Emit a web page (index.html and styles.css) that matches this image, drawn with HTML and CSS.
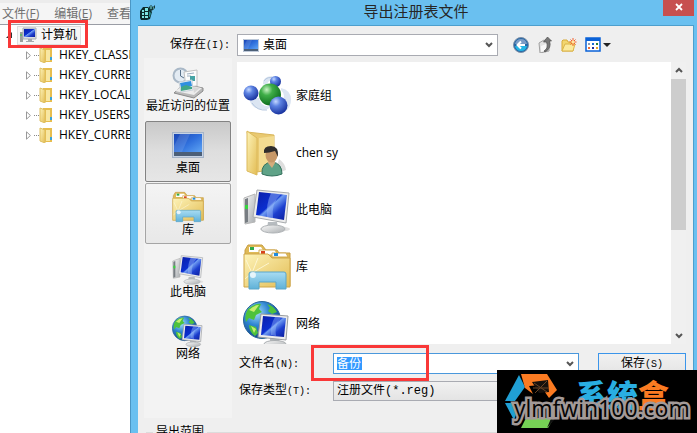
FILE: index.html
```html
<!DOCTYPE html>
<html lang="zh-CN">
<head>
<meta charset="utf-8">
<title>导出注册表文件</title>
<link rel="stylesheet" href="styles.css">
</head>
<body>
<svg class="defs" width="0" height="0" aria-hidden="true">
  <defs>
    <linearGradient id="screen" x1="0" y1="0" x2="1" y2="1">
      <stop offset="0" stop-color="#0a1ea8"/><stop offset=".45" stop-color="#0b2fd0"/><stop offset=".5" stop-color="#6f9cf2"/><stop offset=".7" stop-color="#1d3fcf"/><stop offset="1" stop-color="#0a1b9a"/>
    </linearGradient>
    <linearGradient id="desk" x1="0" y1="0" x2="1" y2="1">
      <stop offset="0" stop-color="#1a45b4"/><stop offset=".5" stop-color="#2f6fdc"/><stop offset="1" stop-color="#5ea4f4"/>
    </linearGradient>
    <linearGradient id="metal" x1="0" y1="0" x2="1" y2="1">
      <stop offset="0" stop-color="#fafafa"/><stop offset="1" stop-color="#a9adb0"/>
    </linearGradient>
    <linearGradient id="paper" x1="0" y1="0" x2="1" y2="1">
      <stop offset="0" stop-color="#fdf3b8"/><stop offset="1" stop-color="#e3bd55"/>
    </linearGradient>
    <linearGradient id="glass" x1="0" y1="0" x2="0" y2="1">
      <stop offset="0" stop-color="#a8dcf2"/><stop offset="1" stop-color="#5fb1d8"/>
    </linearGradient>
    <radialGradient id="blueball" cx=".35" cy=".28" r=".75">
      <stop offset="0" stop-color="#c4d8ff"/><stop offset=".35" stop-color="#5c82e2"/><stop offset="1" stop-color="#16309c"/>
    </radialGradient>
    <radialGradient id="greenball" cx=".35" cy=".28" r=".75">
      <stop offset="0" stop-color="#c9f3c4"/><stop offset=".35" stop-color="#3fae48"/><stop offset="1" stop-color="#0b6a1b"/>
    </radialGradient>
    <radialGradient id="sea" cx=".35" cy=".3" r=".75">
      <stop offset="0" stop-color="#a8e0fb"/><stop offset=".45" stop-color="#2f86d2"/><stop offset="1" stop-color="#0c3a80"/>
    </radialGradient>
  </defs>

  <symbol id="i-home" viewBox="0 0 48 48">
    <path d="M20 12Q20 2 34 5L30 9Q24 8 24 14ZM38 16Q48 18 48 28Q48 35 42 40L38 30Q44 24 38 18ZM6 27Q10 40 25 37L28 34Q18 36 16 26Z" fill="#dbe5f2"/>
    <path d="M21 9Q24 4 32 6M9 31Q14 39 24 38" fill="none" stroke="#b5c7df"/>
    <circle cx="32.500" cy="9.500" r="5.500" fill="url(#blueball)"/>
    <circle cx="8" cy="21" r="7.500" fill="url(#blueball)"/>
    <circle cx="27" cy="22.500" r="11" fill="url(#greenball)"/>
    <circle cx="35.500" cy="33.500" r="9" fill="url(#blueball)"/>
  </symbol>

  <symbol id="i-user" viewBox="0 0 48 48">
    <path d="M32 45L43 41Q42 34 36 30Z" fill="#dedede"/>
    <path d="M4 3L31 6V40L14 43Z" fill="#e9c970" stroke="#d9b65c"/>
    <path d="M16 9L31 7V39L16 42Z" fill="#f3dc91"/>
    <path d="M4 2L14 9V46L4 42Z" fill="url(#paper)" stroke="#dcb95a"/>
    <path d="M19 45Q18 34 29 33Q39 34 39 45Q29 49 19 45Z" fill="#5fa287" stroke="#33705c"/>
    <path d="M25 34L29 39L32 34V30H25Z" fill="#d5ac7c"/>
    <ellipse cx="28.500" cy="26" rx="6" ry="7.500" fill="#c79868"/>
    <path d="M21 24Q20 17 28 17Q36 17 35 28L32 22Q26 24 21 24Z" fill="#2f2d2c"/>
  </symbol>

  <symbol id="i-pc" viewBox="0 0 48 48">
    <ellipse cx="32" cy="43" rx="15" ry="3" fill="#e0e0e0"/>
    <path d="M1 12L12 8V36L2 38Z" fill="url(#metal)" stroke="#b6b6b6"/>
    <path d="M2 13L5 12V36L2 37Z" fill="#777d82"/>
    <rect x="2" y="19" width="3" height="4" fill="#36d53d"/>
    <path d="M25 36H34L35 42H24Z" fill="#b7bcc0"/>
    <ellipse cx="30" cy="43" rx="12" ry="4" fill="url(#metal)" stroke="#afb3b6"/>
    <path d="M14 4L46 7L43 37L10 31Z" fill="#ececec" stroke="#a8abae"/>
    <path d="M16 6L44 9L41 34L13 29Z" fill="url(#screen)"/>
    <path d="M28 7L38 8Q28 17 30 32L24 31Q23 18 28 7Z" fill="#a3c4fb" opacity=".45"/>
  </symbol>

  <symbol id="i-lib" viewBox="0 0 48 48">
    <path d="M2 43V7L5 2H19L23 7H34L36 10H47V43Z" fill="#dfba58" stroke="#c79d42"/>
    <path d="M6 4H18L21 9H6Z" fill="#fff"/><rect x="7" y="4" width="4" height="3" fill="#2ea84a"/>
    <path d="M16 7H32L35 12H16Z" fill="#fff" stroke="#d1ab52"/><rect x="18" y="8" width="4" height="3" fill="#d8421c"/>
    <path d="M29 10H43L45 14H29Z" fill="#fff" stroke="#d1ab52"/><rect x="31" y="10" width="4" height="3" fill="#208ce0"/>
    <path d="M1 11H25L29 15H47V44H1Z" fill="url(#paper)" stroke="#cfa649"/>
    <path d="M9 30L3 17M9 30L15 15M9 30L26 20M9 30L2 36" stroke="#fffbe0" opacity=".8"/>
    <path d="M8 29Q6 29 6 31V46H16V39H33V46H43V31Q43 29 41 29Z" fill="url(#glass)" stroke="#5ba6c9"/>
    <circle cx="10" cy="32" r="3" fill="#fff" opacity=".75"/>
  </symbol>

  <symbol id="i-net" viewBox="0 0 48 48">
    <circle cx="19" cy="20" r="18.500" fill="url(#sea)" stroke="#276498"/>
    <path d="M5 9Q12 3 18 4L16 9L19 12L13 15L11 20L6 18L3 22Q1 15 5 9ZM24 4Q31 6 34 12L29 14L25 11L27 8ZM6 25L13 27L15 33L12 36Q6 32 6 25Z" fill="#4ec23c"/>
    <path d="M6 10Q11 5 16 5L11 12ZM8 26L13 29L11 33Z" fill="#c7ed6d"/>
    <path d="M27 38H36L37 44H27Z" fill="#b3b7ba"/>
    <ellipse cx="32" cy="44" rx="11" ry="3.500" fill="url(#metal)" stroke="#a9adb0"/>
    <path d="M18 14L45 16L43 40L15 37Z" fill="#ececec" stroke="#989ca0"/>
    <path d="M20 16L43 18L41 37L18 35Z" fill="url(#screen)"/>
    <path d="M32 17L38 18Q31 26 33 36L28 35Q27 25 32 17Z" fill="#a3c4fb" opacity=".4"/>
  </symbol>

  <symbol id="i-desk" viewBox="0 0 32 26">
    <rect x=".5" y=".5" width="31" height="25" fill="#c7d3e4" stroke="#a6b4c8"/>
    <rect x="2" y="2" width="28" height="18" fill="url(#desk)"/>
    <path d="M8 2H18L10 20H2V14Z" fill="#fff" opacity=".12"/>
    <rect x="2" y="20" width="28" height="4" fill="#4c5f77"/>
  </symbol>

  <symbol id="i-recent" viewBox="0 0 32 32">
    <path d="M2 26L22 31L31 24V21L12 17Z" fill="#b9b9b9" stroke="#8b8b8b"/>
    <path d="M3 24L22 28L30 21L12 18Z" fill="#ededed"/>
    <circle cx="8.500" cy="8.500" r="7" fill="#e3ebf3" stroke="#a9b8c7" stroke-width="2"/>
    <path d="M8.500 3V9L12 11" fill="none" stroke="#59718a"/>
    <path d="M12 5L25 3V19L14 20Z" fill="#fbfbfb" stroke="#c0c0c0"/>
    <path d="M15 7L22 6M15 9L19 9" stroke="#9caec0"/><rect x="18" y="9" width="5" height="5" fill="#45a3a4"/>
    <path d="M7 15L20 13L21 23L9 25Z" fill="#f9f9f9" stroke="#c6d1da"/>
    <path d="M8 16L19 14L20 19L9 21Z" fill="#2f8fe0"/><path d="M9 20L14 18L20 20V22L9 24Z" fill="#3fa687"/>
    <path d="M21 20L28 21L22 26Z" fill="#d7d7d7"/>
  </symbol>

  <symbol id="i-folder" viewBox="0 0 14 16">
    <path d="M4 1H13V15H4Z" fill="#e6bd4f"/>
    <path d="M7 3H11V14H7Z" fill="#f8e7a2"/>
    <path d="M1 1L6 3V16L1 14Z" fill="url(#paper)" stroke="#dfbf60"/>
    <rect x="11" y="10" width="2" height="3" fill="#3aa3d8"/>
  </symbol>
</svg>

<div class="screen">
  <section class="regedit">
    <nav class="menubar">
      <a href="#file">文件(<u>F</u>)</a><a href="#edit">编辑(<u>E</u>)</a><a href="#view">查看(<u>V</u>)</a>
    </nav>
    <div class="tree">
      <div class="root">
        <svg class="open" viewBox="0 0 6 6" aria-hidden="true"><path d="M6 0V6H0Z" fill="#333"/></svg>
        <span class="rootlabel"><svg class="pc" viewBox="0 0 18 16" aria-hidden="true"><path d="M1 5H4V15H1Z" fill="#9a9f9c"/><path d="M2 7V9" stroke="#2fc83a"/><path d="M4 1H17V12H4Z" fill="#d9dde2" stroke="#a8aeb5"/><path d="M5 2H16V10H5Z" fill="url(#screen)"/><path d="M9 12H13V14H15V15H7V14H9Z" fill="#a5a9ad"/></svg>计算机</span>
        <span class="mark mark-root"></span>
      </div>
      <ul>
        <li><svg class="closed" viewBox="0 0 5 9"><path d="M.5 .8L4.400 4.500L.5 8.200Z" fill="#fff" stroke="#999"/></svg><i></i><svg class="folder"><use href="#i-folder"/></svg>HKEY_CLASSES_ROOT</li>
        <li><svg class="closed" viewBox="0 0 5 9"><path d="M.5 .8L4.400 4.500L.5 8.200Z" fill="#fff" stroke="#999"/></svg><i></i><svg class="folder"><use href="#i-folder"/></svg>HKEY_CURRENT_USER</li>
        <li><svg class="closed" viewBox="0 0 5 9"><path d="M.5 .8L4.400 4.500L.5 8.200Z" fill="#fff" stroke="#999"/></svg><i></i><svg class="folder"><use href="#i-folder"/></svg>HKEY_LOCAL_MACHINE</li>
        <li><svg class="closed" viewBox="0 0 5 9"><path d="M.5 .8L4.400 4.500L.5 8.200Z" fill="#fff" stroke="#999"/></svg><i></i><svg class="folder"><use href="#i-folder"/></svg>HKEY_USERS</li>
        <li><svg class="closed" viewBox="0 0 5 9"><path d="M.5 .8L4.400 4.500L.5 8.200Z" fill="#fff" stroke="#999"/></svg><i></i><svg class="folder"><use href="#i-folder"/></svg>HKEY_CURRENT_CONFIG</li>
      </ul>
    </div>
  </section>

  <section class="dialog">
    <header class="titlebar">
      <svg class="appicon" viewBox="0 0 16 16" aria-hidden="true"><path d="M0 7L3 3H8L10 5L12 8L10 15L7 16H1L0 14Z" fill="#0b2b2c"/><path d="M2 6H4V8H2ZM5 4H8V7H5ZM2 9H4V11H2ZM5 8H8V11H5ZM2 12H4V14H2ZM5 12H8V14H5Z" fill="#7de4e2"/><path d="M9 7L11 9L10 13H9Z" fill="#24898b"/><path d="M9 3L11 1L13 3L15 1V4L13 6L11 7L9 5Z" fill="#153c3e"/><path d="M11 2V5M13 4H14" stroke="#83e6e4"/></svg>
      <h1>导出注册表文件</h1>
      <button class="close" aria-label="关闭"><svg viewBox="0 0 8 8"><path d="M1 1L7 7M7 1L1 7" stroke="#fff" stroke-width="1.800"/></svg></button>
    </header>

    <form class="body">
      <div class="toolbar">
        <label for="lookin">保存在<span class="key">(I):</span></label>
        <div class="combo lookin">
          <svg class="deskicon"><use href="#i-desk"/></svg>
          <select id="lookin"><option>桌面</option></select>
          <svg class="chev" viewBox="0 0 8 6"><path d="M1 1L4 4L7 1" fill="none" stroke="#555" stroke-width="2"/></svg>
        </div>
        <div class="tools">
          <button type="button" aria-label="后退"><svg viewBox="0 0 16 16"><circle cx="8" cy="8" r="7.500" fill="#2467a6" stroke="#7b8fa8"/><path d="M2 9H14Q13 14 8 14Q3 14 2 9Z" fill="#25b5e5"/><path d="M2 7Q3 2 8 2Q13 2 14 7Z" fill="#7b9cc6"/><path d="M12 8H5M8 4.500L4.500 8L8 11.500" fill="none" stroke="#fff" stroke-width="2"/></svg></button>
          <button type="button" aria-label="向上"><svg viewBox="0 0 16 16"><path d="M2 6L7 3L12 5V14L3 16Z" fill="#e2e2e2" stroke="#a0a0a0"/><path d="M4 9L9 7V13L4 15Z" fill="#f8f8f8"/><path d="M7 14Q12 11 9.500 5H6.500L10.500 0L14.500 4H12.500Q15 11 8 15Z" fill="#777" stroke="#4e4e4e" stroke-width=".7"/></svg></button>
          <button type="button" aria-label="新建文件夹"><svg viewBox="0 0 16 16"><path d="M1 14V4L2 3H6L7 5H12V14Z" fill="#f2d66f" stroke="#d7ab3a"/><path d="M1 14L4 7H14L12 14Z" fill="#fbea9d" stroke="#dbb448"/><path d="M12 1V9M8.500 5H15.500M9.500 2.500L14.500 7.500M14.500 2.500L9.500 7.500" stroke="#f2602c"/><circle cx="12" cy="5" r="1.500" fill="#ffe9a0"/></svg></button>
          <button type="button" aria-label="视图" class="views"><svg viewBox="0 0 16 16"><rect x="1" y="1" width="14" height="13" fill="#fff" stroke="#0a62d8" stroke-width="1.500"/><path d="M1 1H15V4H1Z" fill="#0a62d8"/><path d="M3 6H5V8H3Z" fill="#8c9cb4"/><path d="M7 6H9V8H7Z" fill="#156cd8"/><path d="M11 6H13V8H11Z" fill="#257f37"/><path d="M3 10H5V12H3Z" fill="#f06d35"/><path d="M7 10H9V12H7Z" fill="#1d2c99"/><path d="M11 10H13V12H11Z" fill="#eaa52b"/></svg><svg class="caret" viewBox="0 0 8 4"><path d="M0 0H8L4 4Z" fill="#222"/></svg></button>
        </div>
      </div>

      <div class="content">
        <nav class="places">
          <button type="button"><svg><use href="#i-recent"/></svg>最近访问的位置</button>
          <button type="button" class="selected"><svg><use href="#i-desk"/></svg>桌面</button>
          <button type="button" class="raised"><svg><use href="#i-lib"/></svg>库</button>
          <button type="button"><svg><use href="#i-pc"/></svg>此电脑</button>
          <button type="button"><svg><use href="#i-net"/></svg>网络</button>
        </nav>

        <div class="main">
          <div class="listing">
            <ul>
              <li><svg><use href="#i-home"/></svg>家庭组</li>
              <li><svg><use href="#i-user"/></svg>chen sy</li>
              <li><svg><use href="#i-pc"/></svg>此电脑</li>
              <li><svg><use href="#i-lib"/></svg>库</li>
              <li><svg><use href="#i-net"/></svg>网络</li>
            </ul>
            <div class="scrollbar" aria-hidden="true">
              <svg viewBox="0 0 8 6"><path d="M1 5L4 2L7 5" fill="none" stroke="#555" stroke-width="2"/></svg>
              <div class="track"><div class="thumb"></div></div>
              <svg viewBox="0 0 8 6"><path d="M1 1L4 4L7 1" fill="none" stroke="#555" stroke-width="2"/></svg>
            </div>
          </div>

          <div class="fields">
            <label for="fname">文件名<span class="key">(N):</span></label>
            <div class="combo name">
              <input id="fname" type="text" value="备份">
              <svg class="chev" viewBox="0 0 8 6"><path d="M1 1L4 4L7 1" fill="none" stroke="#555" stroke-width="2"/></svg>
              <span class="mark mark-name"></span>
            </div>
            <button class="save" type="submit">保存<span class="key">(S)</span></button>
            <label for="ftype">保存类型<span class="key">(T):</span></label>
            <div class="combo type">
              <select id="ftype"><option>注册文件(*.reg)</option></select>
            </div>
          </div>
        </div>
      </div>

      <fieldset class="range"><legend>导出范围</legend></fieldset>
    </form>
  </section>

  <aside class="watermark">
    <svg viewBox="0 0 52 56" aria-hidden="true">
      <path d="M14 1L0 27H10L20 13Z" fill="#209fd4"/>
      <path d="M0 29L9 46L14 33L10 29Z" fill="#209fd4"/>
      <path d="M16 0H42L52 16L44 24L35 11L24 12L28 20L20 14Z" fill="#fb7b22"/>
      <path d="M27 8L43 6L44 18L34 19Z" fill="#17110d"/><path d="M29 9L42 18M42 7L30 19M28 14H44" stroke="#6b4526"/>
      <path d="M16 54L21 44H49L43 54Z" fill="#76d155"/><path d="M42 54L47 42L50 45Z" fill="#111"/>
    </svg>
    <p class="brand">系统<b>盒</b></p>
    <p class="site">ylmfwin100.com</p>
  </aside>
</div>
</body>
</html>
```
FILE: styles.css
```css
* { box-sizing: border-box; }

body {
  margin: 0;
  overflow: hidden;
  font: 12px/14px "Open Sans", "Noto Sans CJK SC", sans-serif;
  color: #000;
}

button, input, select {
  font: inherit;
  color: inherit;
  margin: 0;
  padding: 0;
  border: 0;
  background: none;
}

ul { list-style: none; margin: 0; padding: 0; }

.defs { position: absolute; }

.key { font-family: "Liberation Mono", monospace; font-size: 10px; }

.screen {
  position: relative;
  display: grid;
  grid-template-columns: 130px minmax(0, 1fr);
  height: 100vh;
  overflow: hidden;
}

/* Registry editor behind the dialog */
.regedit { overflow: hidden; background: #fff; }

.menubar {
  display: flex;
  gap: 15px;
  height: 25px;
  padding: 4px 0 0 2px;
  border-top: 3px solid #ececec;
  border-bottom: 1px solid #9a9da5;
  background: #f5f5f5;
}

.menubar a { flex: none; color: #6f6f6f; text-decoration: none; }

.root {
  position: relative;
  display: flex;
  align-items: center;
  gap: 5px;
  height: 20px;
  padding-left: 6px;
}

.open { width: 6px; height: 6px; }

.rootlabel {
  display: flex;
  align-items: center;
  gap: 4px;
  height: 19px;
  padding: 0 3px 0 1px;
  border: 1px solid #dedede;
  background: #f6f6f6;
}

.pc { width: 18px; height: 16px; }

.mark { position: absolute; border: 3px solid #f93838; pointer-events: none; }
.mark-root { left: 8px; top: -5px; width: 80px; height: 28px; }

.tree li {
  display: flex;
  align-items: center;
  height: 20px;
  padding-left: 26px;
  white-space: nowrap;
}

.closed { flex: none; width: 5px; height: 9px; }
.tree i { flex: none; width: 5px; margin: 0 0 0 3px; border-top: 1px dotted #888; }
.folder { flex: none; width: 14px; height: 16px; margin-right: 6px; }

/* Dialog frame */
.dialog {
  display: flex;
  flex-direction: column;
  padding: 0 3px 0 7px;
  border-left: 1px solid #4b96c4;
  background: #6ac0f0;
}

.titlebar {
  display: grid;
  grid-template-columns: 31px 1fr 31px;
  align-items: center;
  height: 25px;
  flex: none;
}

.appicon { width: 16px; height: 16px; margin: 0 0 2px 2px; }

.titlebar h1 {
  margin: 0;
  padding-bottom: 4px;
  font-size: 15px;
  line-height: 20px;
  font-weight: 400;
  text-align: center;
  color: #262626;
}

.close {
  display: flex;
  align-items: center;
  justify-content: center;
  align-self: start;
  height: 16px;
  background: #c75050;
}

.close svg { width: 8px; height: 8px; margin-bottom: 3px; }

.body {
  flex: none;
  padding: 8px 7px 0 6px;
  border: solid #4d9fcd;
  border-width: 1px 1px 0 0;
  background: #efefef;
}

.toolbar {
  display: grid;
  grid-template-columns: 88px 261px 1fr;
  column-gap: 5px;
  align-items: center;
  height: 22px;
}

.toolbar label { padding-left: 26px; }

.combo {
  position: relative;
  display: flex;
  align-items: center;
  border: 1px solid #a9abb2;
  background: #fff;
}

.combo select, .combo input {
  flex: 1;
  min-width: 0;
  height: 100%;
  appearance: none;
  outline: 0;
}

.chev { flex: none; width: 8px; height: 6px; margin-right: 4px; }

.lookin { height: 22px; padding-left: 5px; gap: 4px; }
.deskicon { width: 16px; height: 13px; }

.tools { display: flex; align-items: center; gap: 8px; padding-left: 10px; }
.tools button { display: flex; align-items: center; gap: 2px; }
.tools svg { width: 16px; height: 16px; }
.tools .caret { width: 8px; height: 4px; }

/* Places bar and file list */
.content {
  display: grid;
  grid-template-columns: 88px minmax(0, 1fr);
  column-gap: 5px;
  padding-top: 2px;
}

.places {
  display: flex;
  flex-direction: column;
  gap: 1px;
  height: 360px;
  padding: 1px;
  background: #f3f3f3;
}

.places button {
  display: flex;
  flex-direction: column;
  align-items: center;
  height: 61px;
  padding-top: 7px;
  border: 1px solid transparent;
  border-radius: 2px;
  white-space: nowrap;
}

.places svg { flex: none; width: 32px; height: 32px; }

.places .selected {
  border: 1px solid #838383;
  background: linear-gradient(#c9c9c9, #dedede 50%, #e6e6e6);
}

.places .raised {
  border: 1px solid #a5a5a5;
  background: linear-gradient(#f4f4f4, #e8e8e8);
}

.listing {
  display: grid;
  grid-template-columns: 1fr 15px;
  height: 282px;
  margin-top: 4px;
  overflow: hidden;
  background: #fff;
}

.listing ul { padding: 5px 0 0 6px; }

.listing li {
  display: flex;
  align-items: center;
  gap: 5px;
  height: 57px;
}

.listing li svg { width: 48px; height: 48px; }

.scrollbar {
  display: flex;
  flex-direction: column;
  align-items: center;
  height: 282px;
  padding: 5px 0;
  gap: 6px;
  background: #f0f0f0;
}

.scrollbar svg { flex: none; width: 8px; height: 6px; }
.track { flex: 1; width: 100%; }
.thumb { height: 61%; background: #cdcdcd; }

/* File name and type */
.fields {
  display: grid;
  grid-template-columns: 94px 246px 1fr;
  grid-template-rows: 21px 20px;
  row-gap: 7px;
  align-items: center;
  padding: 9px 0 0 2px;
}

.name { height: 21px; border-color: #4a98dc; }

.name input {
  flex: none;
  width: 25px;
  height: 13px;
  margin: 0 auto 0 3px;
  line-height: 13px;
  background: #3399ff;
  color: #fff;
}

.type {
  height: 20px;
  padding-left: 3px;
  background: linear-gradient(#f1f1f1, #e4e4e4);
}

.type select { font-family: "Liberation Mono", "Noto Sans CJK SC", monospace; }

.mark-name { left: -23px; top: -9px; width: 118px; height: 36px; }

.save {
  justify-self: end;
  width: 88px;
  height: 21px;
  border: 1px solid #3b95ea;
  background: linear-gradient(#f1f1f1, #e5e5e5);
}

.range {
  height: 40px;
  margin: 7px 0 0 2px;
  padding: 0;
  border: 1px solid #dcdcdc;
}

.range legend { margin-left: 6px; padding: 0 3px; }

/* Corner watermark */
.watermark {
  position: absolute;
  right: 0;
  bottom: 0;
  width: 200px;
  height: 63px;
  overflow: hidden;
  background: #000;
}

.watermark p { position: absolute; margin: 0; white-space: nowrap; }
.watermark svg { position: absolute; left: 8px; top: 4px; width: 52px; height: 56px; }

.brand {
  left: 79px;
  top: 6px;
  font: 900 31px/36px "Noto Sans CJK SC", sans-serif;
  color: #29aee2;
}

.brand b { color: #fb7b22; }

.site {
  left: 17px;
  top: 20px;
  font: 23px/36px "Open Sans", sans-serif;
  color: #050505;
  -webkit-text-stroke: 5px #a39a98;
  paint-order: stroke fill;
}
```
